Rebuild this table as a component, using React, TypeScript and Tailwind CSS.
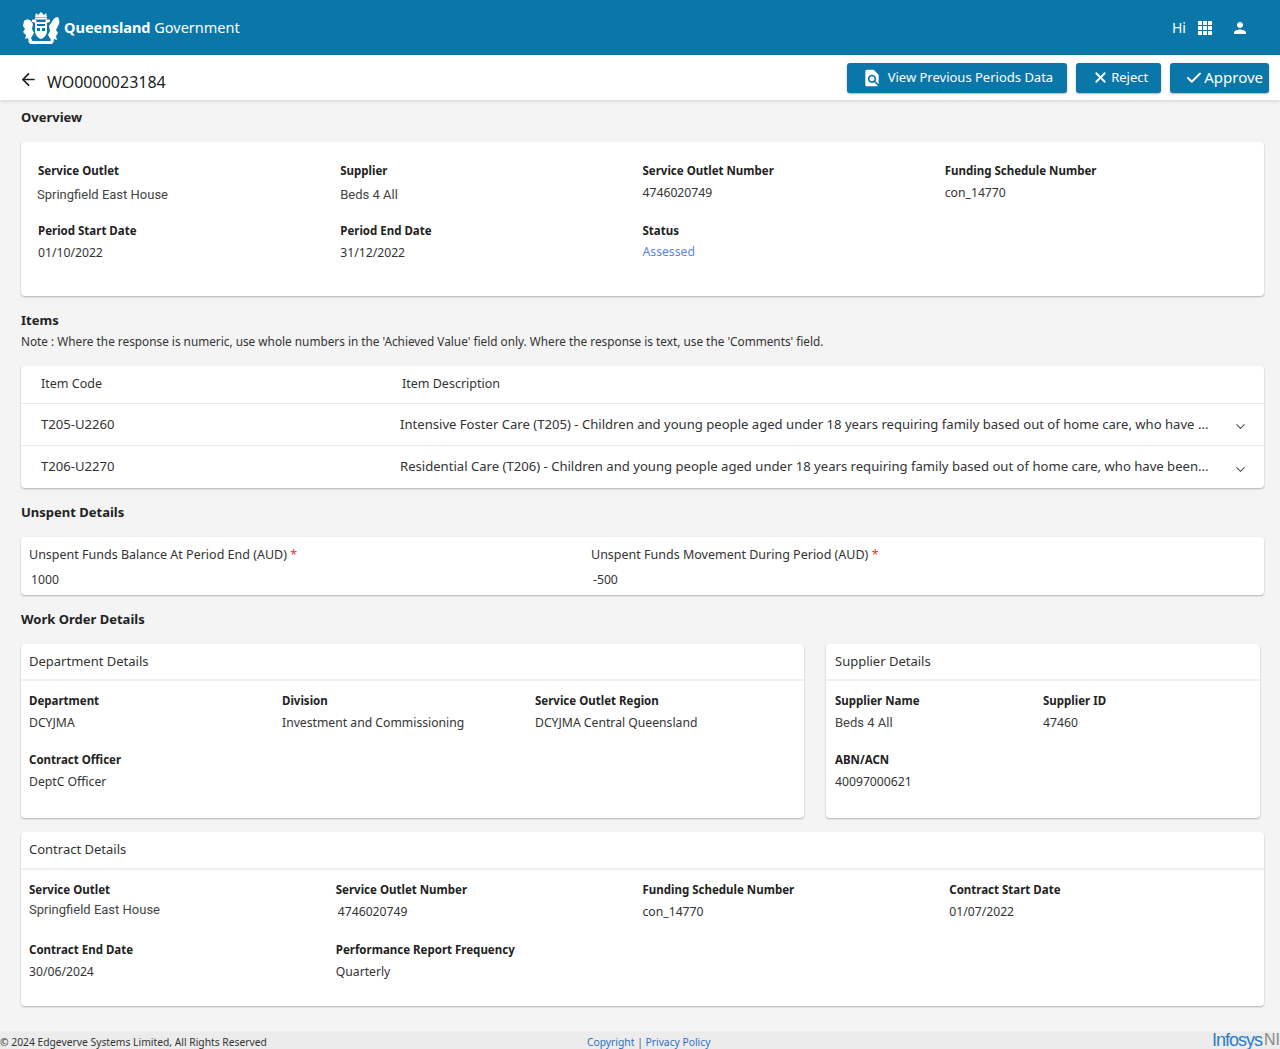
import { ArrowLeft, Check, ChevronDown, X } from "lucide-react";

const Crest = () => (
  <svg width="40" height="36" viewBox="0 0 40 36" fill="#fff">
    {/* crown */}
    <path d="M15 3l2 2 3-3 3 3 2-2 1 4H14z" />
    <rect x="14" y="7.5" width="12" height="2" />
    {/* helm / mantling */}
    <path d="M11 10c2-1 4 0 5 1l-2 2c-1-1-2-1-3-1zM29 10c-2-1-4 0-5 1l2 2c1-1 2-1 3-1z" />
    {/* shield */}
    <path d="M14 12h12v9c0 4-3 7-6 8-3-1-6-4-6-8z" />
    <path d="M16 14h8v2h-8zM16 18h3v3h-3zM21 18h3v3h-3z" fill="#0878aa" />
    {/* lion left */}
    <path d="M3 11c2-2 5-2 7 0l2 3-1 5 2 4-3 5 2 4H8l-1-4-3 1 1-4-3-3 2-3-2-3z" />
    {/* bird right */}
    <path d="M37 7c-2 0-4 1-5 3l-4 6 1 5-2 4 3 5-2 3h4l1-4 3 1-1-4 2-3-2-3 3-6c1-2 0-5-1-7z" />
    {/* motto scroll */}
    <path d="M7 31h26l-2 3H9z" />
  </svg>
);

const GridIcon = () => (
  <svg width="14" height="14" viewBox="0 0 14 14" fill="#fff">
    {[0, 5, 10].map((y) =>
      [0, 5, 10].map((x) => <rect key={`${x}-${y}`} x={x} y={y} width="4" height="4" />)
    )}
  </svg>
);

const UserIcon = () => (
  <svg width="18" height="18" viewBox="0 0 24 24" fill="#fff">
    <path d="M12 12c2.21 0 4-1.79 4-4s-1.790-4-4-4-4 1.79-4 4 1.79 4 4 4zm0 2c-2.67 0-8 1.34-8 4v2h16v-2c0-2.66-5.33-4-8-4z" />
  </svg>
);

const FindInPage = () => (
  <svg width="20" height="20" viewBox="0 0 24 24" fill="#fff">
    <path d="M20 19.59V8l-6-6H6c-1.1 0-1.99.9-1.99 2L4 20c0 1.1.89 2 1.99 2H18c.45 0 .85-.15 1.19-.4l-4.43-4.43c-.8.52-1.74.83-2.760.83-2.76 0-5-2.24-5-5s2.24-5 5-5 5 2.24 5 5c0 1.02-.31 1.96-.83 2.75L20 19.59zM9 13c0 1.66 1.34 3 3 3s3-1.34 3-3-1.34-3-3-3-3 1.34-3 3z" />
  </svg>
);

const Field = ({
  label,
  value,
  valueClass = "mt-[5px] text-[12.2px] text-[#333]",
}: {
  label: string;
  value: string;
  valueClass?: string;
}) => (
  <div>
    <div className="text-[11.5px] font-bold leading-4 text-[#222]">{label}</div>
    <div className={`leading-[18px] ${valueClass}`}>{value}</div>
  </div>
);

const roboto = "mt-[5px] font-['Roboto',sans-serif] text-[13px] text-[#444]";

const SectionTitle = ({ children, className = "" }: { children: string; className?: string }) => (
  <h2 className={`text-[13px] font-bold leading-[18px] text-[#222] ${className}`}>{children}</h2>
);

const card = "rounded-[4px] bg-white shadow-[0_1px_2px_rgba(0,0,0,0.28)]";

const items = [
  {
    code: "T205-U2260",
    desc: "Intensive Foster Care (T205) - Children and young people aged under 18 years requiring family based out of home care, who have ...",
  },
  {
    code: "T206-U2270",
    desc: "Residential Care (T206) - Children and young people aged under 18 years requiring family based out of home care, who have been...",
  },
];

export default function App() {
  return (
    <div className="flex min-h-[1049px] flex-col bg-[#f4f4f4] font-['Noto_Sans',sans-serif] text-[#333]">
      {/* top bar */}
      <header className="flex h-[55px] items-center bg-[#0a77a8] pl-[21px] pr-[31px]">
        <Crest />
        <div className="ml-[3px] text-[14.5px] leading-none text-white">
          <span className="font-bold">Queensland</span> Government
        </div>
        <div className="ml-auto flex items-center">
          <span className="text-[14px] text-white">Hi</span>
          <span className="ml-[12px]"><GridIcon /></span>
          <span className="ml-[19px]"><UserIcon /></span>
        </div>
      </header>

      {/* sub header */}
      <div className="flex h-[45px] items-center bg-white pl-[19px] pr-[11px] shadow-[0_2px_3px_rgba(0,0,0,0.1)]">
        <ArrowLeft className="mt-[4px] h-[19px] w-[19px] text-[#222]" strokeWidth={2.2} />
        <div className="ml-[9px] mt-[8px] text-[16px] text-[#222]">WO0000023184</div>
        <div className="ml-auto flex items-center gap-[9px]">
          <button className="flex h-[30px] items-center gap-[6px] rounded-[3px] bg-[#0a77a8] pl-[15px] pr-[14px] text-[13px] text-white shadow-[0_1px_2px_rgba(0,0,0,0.3)]">
            <FindInPage />
            View Previous Periods Data
          </button>
          <button className="flex h-[30px] items-center gap-[2px] rounded-[3px] bg-[#0a77a8] pl-[16px] pr-[13px] text-[13px] text-white shadow-[0_1px_2px_rgba(0,0,0,0.3)]">
            <X className="h-[17px] w-[17px]" strokeWidth={2.5} />
            Reject
          </button>
          <button className="flex h-[30px] items-center gap-[1px] rounded-[3px] bg-[#0a77a8] pl-[15px] pr-[6px] text-[15px] text-white shadow-[0_1px_2px_rgba(0,0,0,0.3)]">
            <Check className="h-[18px] w-[18px]" strokeWidth={2.5} />
            Approve
          </button>
        </div>
      </div>

      <main className="flex-1 pl-[21px] pr-[16px]">
        {/* overview */}
        <SectionTitle className="mt-[8px]">Overview</SectionTitle>
        <div className={`${card} mt-[16px] grid grid-cols-4 gap-y-[19px] px-[17px] pb-[34px] pt-[21px]`}>
          <Field label="Service Outlet" value="Springfield East House" valueClass={`${roboto} -ml-[1px] mt-[7px]`} />
          <Field label="Supplier" value="Beds 4 All" valueClass={`${roboto} mt-[7px]`} />
          <Field label="Service Outlet Number" value="4746020749" />
          <Field label="Funding Schedule Number" value="con_14770" />
          <Field label="Period Start Date" value="01/10/2022" />
          <Field label="Period End Date" value="31/12/2022" />
          <Field label="Status" value="Assessed" valueClass="mt-[4px] text-[12.2px] text-[#5b82e6]" />
        </div>

        {/* items */}
        <SectionTitle className="mt-[15px]">Items</SectionTitle>
        <p className="mt-[4px] text-[11.8px] leading-4 text-[#333]">
          Note : Where the response is numeric, use whole numbers in the 'Achieved Value' field only. Where the response is text, use the 'Comments' field.
        </p>
        <div className={`${card} mt-[17px]`}>
          <div className="flex h-[38px] items-center border-b border-[#ebebeb] text-[12.5px] text-[#333]">
            <div className="w-[381px] pl-[20px]">Item Code</div>
            <div>Item Description</div>
          </div>
          {items.map((it, i) => (
            <div
              key={it.code}
              className={`flex h-[42px] items-center text-[13.1px] text-[#333] ${i === 0 ? "border-b border-[#ebebeb]" : ""}`}
            >
              <div className="w-[379px] shrink-0 pl-[20px]">{it.code}</div>
              <div className="w-[833px] whitespace-nowrap">{it.desc}</div>
              <ChevronDown className="mt-[4px] h-[15px] w-[15px] text-[#555]" strokeWidth={1.8} />
            </div>
          ))}
        </div>

        {/* unspent */}
        <SectionTitle className="mt-[15px]">Unspent Details</SectionTitle>
        <div className={`${card} mt-[16px] grid grid-cols-[562px_1fr] pb-[6px] pl-[8px] pt-[10px]`}>
          {[
            ["Unspent Funds Balance At Period End (AUD)", "1000"],
            ["Unspent Funds Movement During Period (AUD)", "-500"],
          ].map(([l, v]) => (
            <div key={l}>
              <div className="text-[12.5px] leading-4 text-[#333]">
                {l} <span className="text-[#e53935]">*</span>
              </div>
              <div className="mt-[8px] pl-[2px] text-[12.2px] leading-[18px] text-[#333]">{v}</div>
            </div>
          ))}
        </div>

        {/* work order */}
        <SectionTitle className="mt-[15px]">Work Order Details</SectionTitle>
        <div className="mt-[16px] flex gap-[22px]">
          <div className={`${card} h-[174px] w-[783px]`}>
            <div className="flex h-[37px] items-center border-b-2 border-[#efefef] pl-[8px] text-[13px] text-[#333]">
              Department Details
            </div>
            <div className="grid grid-cols-[253px_253px_1fr] gap-y-[20px] pl-[8px] pt-[12px]">
              <Field label="Department" value="DCYJMA" />
              <Field label="Division" value="Investment and Commissioning" />
              <Field label="Service Outlet Region" value="DCYJMA Central Queensland" />
              <Field label="Contract Officer" value="DeptC Officer" />
            </div>
          </div>
          <div className={`${card} h-[174px] w-[434px]`}>
            <div className="flex h-[37px] items-center border-b-2 border-[#efefef] pl-[9px] text-[13px] text-[#333]">
              Supplier Details
            </div>
            <div className="grid grid-cols-2 gap-y-[20px] px-[9px] pt-[12px]">
              <Field label="Supplier Name" value="Beds 4 All" valueClass={roboto} />
              <Field label="Supplier ID" value="47460" />
              <Field label="ABN/ACN" value="40097000621" />
            </div>
          </div>
        </div>

        <div className={`${card} mt-[14px] h-[174px]`}>
          <div className="flex h-[38px] items-center border-b-2 border-[#efefef] pl-[8px] text-[13px] text-[#333]">
            Contract Details
          </div>
          <div className="grid grid-cols-4 gap-y-[21px] px-[8px] pt-[12px]">
            <Field label="Service Outlet" value="Springfield East House" valueClass={`${roboto} !mt-[3px]`} />
            <Field label="Service Outlet Number" value="4746020749" valueClass="mt-[5px] pl-[2px] text-[12.2px] text-[#333]" />
            <Field label="Funding Schedule Number" value="con_14770" />
            <Field label="Contract Start Date" value="01/07/2022" />
            <Field label="Contract End Date" value="30/06/2024" />
            <Field label="Performance Report Frequency" value="Quarterly" />
          </div>
        </div>
      </main>

      {/* footer */}
      <footer className="mt-[25px] flex h-[18px] items-end bg-[#ececec] text-[10.3px] leading-[14px]">
        <span className="w-[587px] shrink-0 text-[#333]">© 2024 Edgeverve Systems Limited, All Rights Reserved</span>
        <span className="text-[#2f6fbf]">
          Copyright <span className="text-[#555]">|</span> Privacy Policy
        </span>
        <span className="ml-auto flex items-end leading-[18px]">
          <span className="font-['Liberation_Sans',sans-serif] text-[18px] tracking-[-1px] text-[#2a7bc4]">Infosys</span>
          <span className="pl-[2px] font-['Liberation_Sans',sans-serif] text-[16px] text-[#8a8a8a]">NI</span>
        </span>
      </footer>
    </div>
  );
}
